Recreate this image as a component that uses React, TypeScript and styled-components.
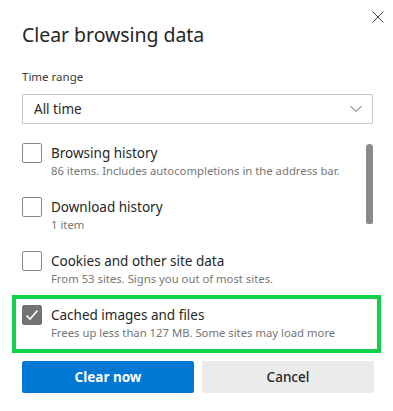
import React from "react";
import styled, { createGlobalStyle } from "styled-components";

const Global = createGlobalStyle`
  html, body { margin: 0; padding: 0; background: #ffffff; }
  body { font-family: "Noto Sans", "Open Sans", sans-serif; color: #262626; }
  * { box-sizing: border-box; }
`;

const Dialog = styled.div`
  position: relative;
  width: 393px;
  height: 411px;
  padding: 21px 19px 0 22px;
  display: flex;
  flex-direction: column;
  background: #fff;
`;

const CloseButton = styled.button`
  position: absolute;
  top: 9px;
  right: 8px;
  width: 15px;
  height: 15px;
  padding: 0;
  border: none;
  background: transparent;
  display: flex;
  align-items: center;
  justify-content: center;
`;

const Title = styled.h1`
  margin: 0;
  font-size: 19.5px;
  font-weight: 400;
  line-height: 28px;
  color: #262626;
  letter-spacing: -0.05px;
`;

const Label = styled.div`
  margin-top: 20px;
  font-size: 11.5px;
  line-height: 16px;
  color: #3b3b3b;
`;

const Select = styled.div`
  margin-top: 9px;
  margin-right: 1px;
  height: 30px;
  border: 1px solid #c6c6c6;
  border-radius: 1px;
  display: flex;
  align-items: center;
  justify-content: space-between;
  padding: 0 10px 0 11px;
  font-size: 13.5px;
  color: #262626;
`;

const ListArea = styled.div`
  position: relative;
  margin-top: 19px;
  margin-right: 1px;
  display: flex;
  flex-direction: column;
  gap: 18px;
`;

const Thumb = styled.div`
  position: absolute;
  right: 0;
  top: 1px;
  width: 7px;
  height: 80px;
  border-radius: 4px 4px 3px 3px;
  background: #8a8a8a;
`;

const Item = styled.div<{ $highlight?: boolean }>`
  position: relative;
  display: flex;
  align-items: flex-start;
  gap: 9px;
  &::after {
    content: "";
    display: ${(p) => (p.$highlight ? "block" : "none")};
    position: absolute;
    left: -10px;
    right: -8px;
    top: -10px;
    bottom: -12px;
    border: 4px solid #12d14a;
    pointer-events: none;
  }
`;

const Box = styled.div<{ $checked?: boolean }>`
  flex: none;
  width: 20px;
  height: 20px;
  border-radius: 2px;
  border: 1px solid ${(p) => (p.$checked ? "#737373" : "#8a8a8a")};
  background: ${(p) => (p.$checked ? "#737373" : "#fff")};
  display: flex;
  align-items: center;
  justify-content: center;
`;

const ItemText = styled.div`
  display: flex;
  flex-direction: column;
  white-space: nowrap;
`;

const ItemTitle = styled.div`
  font-size: 13.5px;
  line-height: 20px;
  color: #262626;
`;

const ItemSub = styled.div`
  font-size: 11.3px;
  line-height: 16px;
  color: #767676;
`;

const Buttons = styled.div`
  margin-top: 20px;
  display: grid;
  grid-template-columns: 1fr 1fr;
  gap: 8px;
`;

const Button = styled.button<{ $primary?: boolean }>`
  height: 32px;
  border: none;
  border-radius: 2px;
  font-family: "Noto Sans", "Open Sans", sans-serif;
  font-size: 13.5px;
  font-weight: ${(p) => (p.$primary ? 700 : 500)};
  background: ${(p) => (p.$primary ? "#0078d4" : "#ebebeb")};
  color: ${(p) => (p.$primary ? "#ffffff" : "#262626")};
`;

const items = [
  { title: "Browsing history", sub: "86 items. Includes autocompletions in the address bar.", checked: false },
  { title: "Download history", sub: "1 item", checked: false },
  { title: "Cookies and other site data", sub: "From 53 sites. Signs you out of most sites.", checked: false },
  { title: "Cached images and files", sub: "Frees up less than 127 MB. Some sites may load more", checked: true },
];

export default function App() {
  return (
    <>
      <Global />
      <Dialog>
        <CloseButton aria-label="Close">
          <svg width="12" height="12" viewBox="0 0 12 12">
            <path d="M0.5 0.5L11.5 11.5M11.5 0.5L0.5 11.5" stroke="#444" strokeWidth="1" fill="none" />
          </svg>
        </CloseButton>
        <Title>Clear browsing data</Title>
        <Label>Time range</Label>
        <Select>
          <span>All time</span>
          <svg width="12" height="8" viewBox="0 0 12 8">
            <path d="M0.5 1L6 6.5L11.5 1" stroke="#555" strokeWidth="1" fill="none" />
          </svg>
        </Select>
        <ListArea>
          <Thumb />
          {items.map((it) => (
            <Item key={it.title} $highlight={it.checked}>
              <Box $checked={it.checked}>
                {it.checked && (
                  <svg width="14" height="12" viewBox="0 0 14 12">
                    <path d="M1.5 6.5L5 10L12.5 1.5" stroke="#fff" strokeWidth="1.6" fill="none" />
                  </svg>
                )}
              </Box>
              <ItemText>
                <ItemTitle>{it.title}</ItemTitle>
                <ItemSub>{it.sub}</ItemSub>
              </ItemText>
            </Item>
          ))}
        </ListArea>
        <Buttons>
          <Button $primary>Clear now</Button>
          <Button>Cancel</Button>
        </Buttons>
      </Dialog>
    </>
  );
}
